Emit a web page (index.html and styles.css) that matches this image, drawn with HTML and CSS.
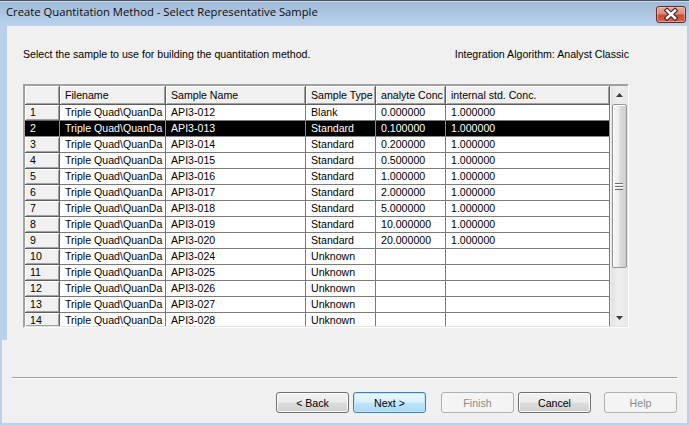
FILE: index.html
```html
<!DOCTYPE html>
<html>
<head>
<meta charset="utf-8">
<title>Create Quantitation Method</title>
<link rel="stylesheet" href="styles.css">
</head>
<body>
<div class="window">
  <div class="titlebar">
    <span class="title">Create Quantitation Method - Select Representative Sample</span>
    <div class="close">
      <svg width="30" height="17" viewBox="0 0 30 17">
        <path d="M11 4.5 L19 12 M19 4.5 L11 12" stroke="#4a2320" stroke-width="4.6" stroke-linecap="square" fill="none"/>
        <path d="M11 4.5 L19 12 M19 4.5 L11 12" stroke="#ffffff" stroke-width="2.4" stroke-linecap="square" fill="none"/>
      </svg>
    </div>
  </div>
  <div class="client">
    <div class="upper">
      <div class="intro">
        <span>Select the sample to use for building the quantitation method.</span>
        <span>Integration Algorithm: Analyst Classic</span>
      </div>
      <div class="grid-outer">
        <div class="grid-inner">
          <div class="table">
            <div class="row head">
              <div class="c rh"></div>
              <div class="c hd">Filename</div>
              <div class="c hd">Sample Name</div>
              <div class="c hd">Sample Type</div>
              <div class="c hd">analyte Conc</div>
              <div class="c hd">internal std. Conc.</div>
            </div>
            <div class="row"><div class="c rh">1</div><div class="c">Triple Quad\QuanDa</div><div class="c">API3-012</div><div class="c">Blank</div><div class="c">0.000000</div><div class="c">1.000000</div></div>
            <div class="row sel"><div class="c rh">2</div><div class="c">Triple Quad\QuanDa</div><div class="c">API3-013</div><div class="c">Standard</div><div class="c">0.100000</div><div class="c">1.000000</div></div>
            <div class="row"><div class="c rh">3</div><div class="c">Triple Quad\QuanDa</div><div class="c">API3-014</div><div class="c">Standard</div><div class="c">0.200000</div><div class="c">1.000000</div></div>
            <div class="row"><div class="c rh">4</div><div class="c">Triple Quad\QuanDa</div><div class="c">API3-015</div><div class="c">Standard</div><div class="c">0.500000</div><div class="c">1.000000</div></div>
            <div class="row"><div class="c rh">5</div><div class="c">Triple Quad\QuanDa</div><div class="c">API3-016</div><div class="c">Standard</div><div class="c">1.000000</div><div class="c">1.000000</div></div>
            <div class="row"><div class="c rh">6</div><div class="c">Triple Quad\QuanDa</div><div class="c">API3-017</div><div class="c">Standard</div><div class="c">2.000000</div><div class="c">1.000000</div></div>
            <div class="row"><div class="c rh">7</div><div class="c">Triple Quad\QuanDa</div><div class="c">API3-018</div><div class="c">Standard</div><div class="c">5.000000</div><div class="c">1.000000</div></div>
            <div class="row"><div class="c rh">8</div><div class="c">Triple Quad\QuanDa</div><div class="c">API3-019</div><div class="c">Standard</div><div class="c">10.000000</div><div class="c">1.000000</div></div>
            <div class="row"><div class="c rh">9</div><div class="c">Triple Quad\QuanDa</div><div class="c">API3-020</div><div class="c">Standard</div><div class="c">20.000000</div><div class="c">1.000000</div></div>
            <div class="row"><div class="c rh">10</div><div class="c">Triple Quad\QuanDa</div><div class="c">API3-024</div><div class="c">Unknown</div><div class="c"></div><div class="c"></div></div>
            <div class="row"><div class="c rh">11</div><div class="c">Triple Quad\QuanDa</div><div class="c">API3-025</div><div class="c">Unknown</div><div class="c"></div><div class="c"></div></div>
            <div class="row"><div class="c rh">12</div><div class="c">Triple Quad\QuanDa</div><div class="c">API3-026</div><div class="c">Unknown</div><div class="c"></div><div class="c"></div></div>
            <div class="row"><div class="c rh">13</div><div class="c">Triple Quad\QuanDa</div><div class="c">API3-027</div><div class="c">Unknown</div><div class="c"></div><div class="c"></div></div>
            <div class="row last"><div class="c rh">14</div><div class="c">Triple Quad\QuanDa</div><div class="c">API3-028</div><div class="c">Unknown</div><div class="c"></div><div class="c"></div></div>
          </div>
          <div class="scroll">
            <div class="arrow">
              <svg width="7" height="4" viewBox="0 0 7 4"><polygon points="0,4 3.5,0 7,4" fill="#3c3c3c"/></svg>
            </div>
            <div class="thumb">
              <svg width="8" height="7" viewBox="0 0 8 7">
                <rect x="0" y="0" width="8" height="1" fill="#6e6e6e"/>
                <rect x="0" y="1" width="8" height="1" fill="#ffffff"/>
                <rect x="0" y="3" width="8" height="1" fill="#6e6e6e"/>
                <rect x="0" y="4" width="8" height="1" fill="#ffffff"/>
                <rect x="0" y="6" width="8" height="1" fill="#6e6e6e"/>
              </svg>
            </div>
            <div class="spacer"></div>
            <div class="arrow">
              <svg width="7" height="4" viewBox="0 0 7 4"><polygon points="0,0 7,0 3.5,4" fill="#3c3c3c"/></svg>
            </div>
          </div>
        </div>
      </div>
    </div>
    <div class="lower">
      <div class="sep"></div>
      <div class="buttons">
        <button class="btn">&lt; Back</button>
        <button class="btn default">Next &gt;</button>
        <button class="btn disabled gap-l">Finish</button>
        <button class="btn">Cancel</button>
        <button class="btn disabled gap-xl">Help</button>
      </div>
    </div>
  </div>
</div>
</body>
</html>
```

FILE: styles.css
```css
* { box-sizing: border-box; }

html, body {
  margin: 0;
  padding: 0;
  width: 689px;
  height: 425px;
  overflow: hidden;
  background: #b9d1ea;
}

.window {
  width: 689px;
  height: 425px;
  display: flex;
  flex-direction: column;
  background: #b9d1ea;
  font-family: "Liberation Sans", Arial, sans-serif;
  font-size: 10.6px;
  color: #000;
}

.titlebar {
  height: 26px;
  flex: none;
  display: flex;
  align-items: flex-start;
  justify-content: space-between;
  border-top: 1px solid #4b5560;
  box-shadow: inset 0 1px 0 #c9dbee;
  background: linear-gradient(#9fb8d7, #b2cbe6 70%, #bad2ea);
  padding: 0 3px 0 6px;
}

.title {
  font-family: "Open Sans", "Noto Sans", sans-serif;
  font-size: 11.25px;
  line-height: 26px;
  margin-top: -2px;
  color: #0c0c0c;
}

.close {
  margin-top: 5px;
  width: 30px;
  height: 17px;
  border: 1px solid #6a2a22;
  border-radius: 3px;
  background: linear-gradient(#e8ab9e, #d98a79 45%, #c64d37 55%, #d0654d);
  box-shadow: inset 0 0 0 1px rgba(255, 220, 210, 0.45);
  display: flex;
  align-items: center;
  justify-content: center;
  overflow: hidden;
}

.close svg { display: block; margin: -1px; }

.client {
  flex: 1;
  margin: 0 2px 2px 2px;
  background: #f0f0f0;
  display: flex;
  flex-direction: column;
}

.upper {
  height: 314px;
  flex: none;
  border-left: 5px solid #b9d1ea;
  padding: 22px 58px 0 16px;
}

.intro {
  display: flex;
  justify-content: space-between;
  height: 13px;
  line-height: 13px;
  white-space: nowrap;
}

.grid-outer {
  margin-top: 23px;
  width: 606px;
  height: 244px;
  border: 1px solid;
  border-color: #a0a0a0 #ffffff #ffffff #a0a0a0;
}

.grid-inner {
  width: 100%;
  height: 100%;
  border: 1px solid;
  border-color: #a0a0a0 #e3e3e3 #e3e3e3 #a0a0a0;
  display: flex;
  overflow: hidden;
}

.table {
  width: 585px;
  flex: none;
  background: #ffffff;
  overflow: hidden;
}

.row {
  display: grid;
  grid-template-columns: 35px 106px 140px 70px 70px 164px;
  height: 16px;
}

.row.head { height: 19px; }
.row.last { height: 13px; }

.c {
  border-right: 1px solid #7a7a7a;
  border-bottom: 1px solid #7a7a7a;
  padding: 0 0 0 5px;
  line-height: 15px;
  white-space: nowrap;
  overflow: hidden;
}

.row.last .c { border-bottom: none; }

.row.head .c { line-height: 18px; }

.hd, .rh {
  background: #f0f0f0;
  border-right-color: #5e5e5e;
  border-bottom-color: #5e5e5e;
  box-shadow: inset 1px 1px 0 #ffffff, inset -1px -1px 0 #a0a0a0;
}

.rh { padding-left: 5px; }

.row.sel .c {
  background: #000000;
  color: #ffffff;
  border-right-color: #8a8a8a;
  border-bottom-color: #8a8a8a;
}

.row.sel .rh { box-shadow: none; }

.scroll {
  width: 17px;
  flex: none;
  display: flex;
  flex-direction: column;
  align-items: center;
  background: linear-gradient(to right, #e2e2e2, #eeeeee 40%, #e9e9e9);
  border-left: 1px solid #f4f4f4;
}

.arrow {
  width: 16px;
  height: 17px;
  flex: none;
  display: flex;
  align-items: center;
  justify-content: center;
}

.arrow svg { display: block; }

.thumb {
  width: 15px;
  height: 164px;
  margin-top: 1px;
  flex: none;
  border: 1px solid #979797;
  border-radius: 2px;
  background: linear-gradient(to right, #f7f7f7, #ececec 45%, #dadada 55%, #cfcfcf);
  box-shadow: inset 1px 1px 0 #ffffff;
  display: flex;
  align-items: center;
  justify-content: center;
}

.thumb svg { display: block; }

.spacer { flex: 1; }

.lower {
  flex: 1;
  display: flex;
  flex-direction: column;
}

.sep {
  margin: 37px 10px 0 10px;
  height: 2px;
  border-top: 1px solid #a0a0a0;
  border-bottom: 1px solid #ffffff;
}

.buttons {
  margin-top: 13px;
  display: flex;
  justify-content: flex-end;
  padding-right: 10px;
  gap: 4px;
}

.btn {
  width: 73px;
  height: 21px;
  margin: 0;
  padding: 0;
  font-family: "Liberation Sans", Arial, sans-serif;
  font-size: 10.6px;
  color: #000;
  border: 1px solid #707070;
  border-radius: 3px;
  background: linear-gradient(#f2f2f2, #ebebeb 48%, #dddddd 52%, #cfcfcf);
  box-shadow: inset 0 0 0 1px #fbfbfb;
}

.btn.default {
  border-color: #3c7fb1;
  background: linear-gradient(#eaf6fd, #d9f0fc 48%, #bee6fd 52%, #a7d9f5);
  box-shadow: inset 0 0 0 1px #c4e5f6;
}

.btn.disabled {
  color: #8a8a8a;
  border-color: #adb2b5;
  background: #f4f4f4;
  box-shadow: none;
}

.gap-l { margin-left: 11px; }
.gap-xl { margin-left: 9px; }
```
